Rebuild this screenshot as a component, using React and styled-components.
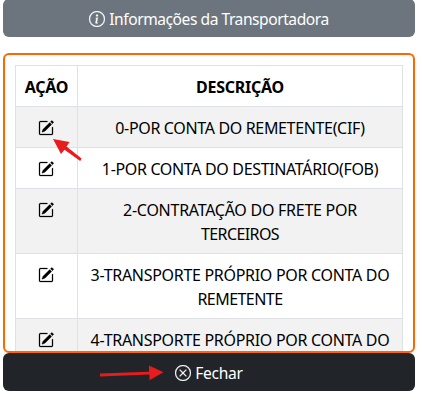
import React from "react";
import styled, { createGlobalStyle } from "styled-components";
import { BsInfoCircle, BsPencilSquare, BsXCircle } from "react-icons/bs";

const GlobalStyle = createGlobalStyle`
  *, *::before, *::after { box-sizing: border-box; }
  body {
    margin: 0;
    overflow: hidden;
    background: #fff;
    color: #000;
    font: 400 16px/24px "Noto Sans", "Open Sans", sans-serif;
  }
`;

const Page = styled.main`
  position: relative;
  width: 412px;
  margin: -1px 0 0 3px;
  display: flex;
  flex-direction: column;
`;

const BarButton = styled.button`
  display: flex;
  align-items: center;
  justify-content: center;
  gap: 4px;
  width: 100%;
  height: 38px;
  padding: 2px 0 0;
  border: 0;
  border-radius: 6px;
  background: ${(p) => p.$background};
  color: #fff;
  font: inherit;
  font-size: 15.6px;
  white-space: nowrap;

  svg {
    stroke-width: 0.25px;
  }
`;

const Label = styled.span`
  letter-spacing: ${(p) => p.$spacing || 0}px;
  white-space: nowrap;
`;

const Panel = styled.section`
  height: 300px;
  margin-top: 16px;
  padding: 10px;
  border: 2px solid #ff6600;
  border-radius: 6px;
  overflow: hidden;
`;

const Table = styled.table`
  width: 388px;
  table-layout: fixed;
  border-collapse: separate;
  border-spacing: 0;
  border: solid #dee2e6;
  border-width: 1px 0 0 1px;
  text-align: center;
`;

const Row = styled.tr`
  background: ${(p) => (p.$striped ? "#f2f2f2" : "#fff")};
`;

const Cell = styled.td`
  padding: 9px 7px 7px;
  border: solid #dee2e6;
  border-width: 0 1px 1px 0;
  vertical-align: top;
  white-space: nowrap;
`;

const HeadCell = styled(Cell).attrs({ as: "th" })`
  width: ${(p) => p.$width || "auto"};
  font-weight: 700;
`;

const EditIcon = styled(BsPencilSquare)`
  display: inline-block;
  margin-right: 2px;
  vertical-align: -2px;
  stroke-width: 0.25px;
`;

const Arrows = styled.svg`
  position: absolute;
  left: -3px;
  top: 1px;
  pointer-events: none;
`;

const rows = [
  [["0-POR CONTA DO REMETENTE(CIF)", -0.34]],
  [["1-POR CONTA DO DESTINATÁRIO(FOB)", -0.34]],
  [["2-CONTRATAÇÃO DO FRETE POR", -0.26], ["TERCEIROS", -0.6]],
  [["3-TRANSPORTE PRÓPRIO POR CONTA DO", -0.3], ["REMETENTE", -0.55]],
  [["4-TRANSPORTE PRÓPRIO POR CONTA DO", -0.3]],
];

export default function App() {
  return (
    <>
      <GlobalStyle />
      <Page>
        <BarButton $background="#6c757d">
          <BsInfoCircle size={16} />
          <Label $spacing={-0.46}>Informações da Transportadora</Label>
        </BarButton>
        <Panel>
          <Table>
            <thead>
              <tr>
                <HeadCell $width="62px"><Label $spacing={-0.25}>AÇÃO</Label></HeadCell>
                <HeadCell><Label $spacing={-0.25}>DESCRIÇÃO</Label></HeadCell>
              </tr>
            </thead>
            <tbody>
              {rows.map((lines, i) => (
                <Row key={i} $striped={i % 2 === 0}>
                  <Cell><EditIcon size={16} /></Cell>
                  <Cell>
                    {lines.map(([text, spacing], n) => (
                      <React.Fragment key={text}>
                        {n > 0 && <br />}
                        <Label $spacing={spacing}>{text}</Label>
                      </React.Fragment>
                    ))}
                  </Cell>
                </Row>
              ))}
            </tbody>
          </Table>
        </Panel>
        <BarButton $background="#212529">
          <BsXCircle size={16} />
          <Label $spacing={-0.3}>Fechar</Label>
        </BarButton>
        <Arrows width="422" height="405" viewBox="0 0 422 405" fill="#e81c1c">
          <path d="M53 139 L69.5 142 L66.5 146.5 L81.6 158.6 L80.2 161 L64.5 149.8 L61 154 Z" />
          <path d="M100 373.5 L149 371.8 V365.5 L163.5 372.3 L149.5 380.3 V374.5 L100 376.5 Z" />
        </Arrows>
      </Page>
    </>
  );
}
